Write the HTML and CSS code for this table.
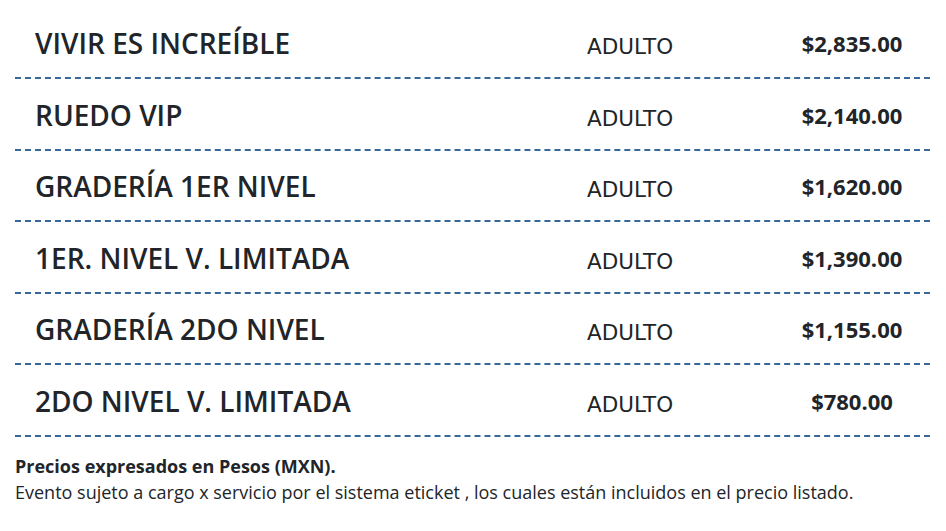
FILE: index.html
```html
<!DOCTYPE html>
<html lang="es">
<head>
<meta charset="utf-8">
<title>Precios</title>
<link rel="stylesheet" href="styles.css">
</head>
<body>
<div class="wrap">
  <div class="prices">
    <div class="row"><div class="name">VIVIR ES INCREÍBLE</div><div class="type">ADULTO</div><div class="price">$2,835.00</div></div>
    <div class="row"><div class="name">RUEDO VIP</div><div class="type">ADULTO</div><div class="price">$2,140.00</div></div>
    <div class="row"><div class="name">GRADERÍA 1ER NIVEL</div><div class="type">ADULTO</div><div class="price">$1,620.00</div></div>
    <div class="row"><div class="name">1ER. NIVEL V. LIMITADA</div><div class="type">ADULTO</div><div class="price">$1,390.00</div></div>
    <div class="row"><div class="name">GRADERÍA 2DO NIVEL</div><div class="type">ADULTO</div><div class="price">$1,155.00</div></div>
    <div class="row"><div class="name">2DO NIVEL V. LIMITADA</div><div class="type">ADULTO</div><div class="price">$780.00</div></div>
  </div>
  <div class="notes">
    <p class="note-title">Precios expresados en Pesos (MXN).</p>
    <p class="note-text">Evento sujeto a cargo x servicio por el sistema eticket , los cuales están incluidos en el precio listado.</p>
  </div>
</div>
</body>
</html>
```
FILE: styles.css
```css
html, body {
  margin: 0;
  padding: 0;
  background: #ffffff;
}
body {
  font-family: "Open Sans", sans-serif;
  color: #212529;
}
.wrap {
  width: 915px;
  padding: 7.8px 0 0 15px;
}
.row {
  display: grid;
  grid-template-columns: 552px 207px 156px;
  align-items: start;
  height: 69.5px;
  border-bottom: 2px dashed #37689a;
}
.name {
  padding: 17.6px 0 0 20px;
  font-weight: 600;
  font-size: 28px;
  line-height: 36px;
  white-space: nowrap;
}
.type {
  padding: 24.7px 0 0 20px;
  font-family: "DejaVu Sans", sans-serif;
  font-size: 21.5px;
  line-height: 30px;
}
.price {
  padding-top: 20.5px;
  text-align: center;
  font-weight: 700;
  font-size: 22px;
  line-height: 30px;
}
.notes {
  padding-top: 16px;
}
.notes p {
  margin: 0;
  font-size: 18px;
  line-height: 26px;
}
.note-title {
  font-weight: 700;
}
```
